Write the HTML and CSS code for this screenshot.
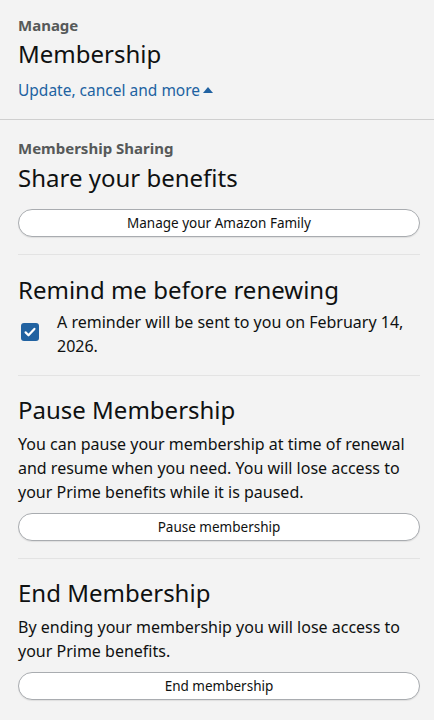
FILE: index.html
```html
<!DOCTYPE html>
<html lang="en">
<head>
    <meta charset="UTF-8">
    <meta name="viewport" content="width=device-width, initial-scale=1.0">
    <title>Manage Membership</title>
    <link rel="stylesheet" href="styles.css">
</head>
<body>
    <div class="card">
        <header class="manage-head">
            <div class="eyebrow">Manage</div>
            <h1 class="title">Membership</h1>
            <a class="toggle" href="#">Update, cancel and more<span class="caret"></span></a>
        </header>

        <div class="manage-body">
            <section class="block sharing">
                <div class="eyebrow">Membership Sharing</div>
                <h2 class="title">Share your benefits</h2>
                <button class="pill">Manage your Amazon Family</button>
            </section>

            <section class="block reminder">
                <h2 class="title">Remind me before renewing</h2>
                <label class="check-row">
                    <span class="box">
                        <svg viewBox="0 0 18 18" width="18" height="18">
                            <path d="M4.6 9.4l2.9 2.9 5.9-6.4" fill="none" stroke="#fff" stroke-width="2.2" stroke-linecap="round" stroke-linejoin="round"/>
                        </svg>
                    </span>
                    <span class="check-text">A reminder will be sent to you on February 14, 2026.</span>
                </label>
            </section>

            <section class="block">
                <h2 class="title">Pause Membership</h2>
                <p class="desc">You can pause your membership at time of renewal and resume when you need. You will lose access to your Prime benefits while it is paused.</p>
                <button class="pill">Pause membership</button>
            </section>

            <section class="block">
                <h2 class="title">End Membership</h2>
                <p class="desc">By ending your membership you will lose access to your Prime benefits.</p>
                <button class="pill">End membership</button>
            </section>
        </div>
    </div>
</body>
</html>
```

FILE: styles.css
```css
*, *::before, *::after {
    box-sizing: border-box;
}
body {
    margin: 0;
    background: #fff;
    font-family: "Noto Sans", "Liberation Sans", sans-serif;
    color: #0f1111;
}
.card {
    background: #f3f3f3;
    padding-bottom: 12px;
}
.manage-head {
    padding: 15px 14px 18px 18px;
    border-bottom: 1px solid #cfcfcf;
}
.eyebrow {
    font-size: 15px;
    font-weight: 700;
    color: #565959;
    line-height: 20px;
}
.title {
    margin: 0;
    font-size: 24px;
    font-weight: 400;
    line-height: 32px;
}
.manage-head .title {
    margin-top: 3px;
}
.toggle {
    display: inline-flex;
    align-items: center;
    margin-top: 9px;
    font-size: 15.5px;
    line-height: 22px;
    color: #2162a1;
    text-decoration: none;
}
.caret {
    width: 0;
    height: 0;
    margin-left: 3px;
    border-left: 5px solid transparent;
    border-right: 5px solid transparent;
    border-bottom: 6px solid #2162a1;
}
.manage-body {
    padding: 0 14px 0 18px;
}
.block {
    padding: 18px 0 17px;
    border-bottom: 1px solid #e3e3e3;
}
.block:last-child {
    border-bottom: none;
}
.block.reminder {
    padding-top: 19px;
}
.block .eyebrow + .title {
    margin-top: 4px;
}
.pill {
    display: block;
    width: 100%;
    height: 28px;
    margin-top: 15px;
    background: #fff;
    border: 1px solid #a9acb0;
    border-radius: 14px;
    font-family: inherit;
    font-size: 13.5px;
    color: #0f1111;
    box-shadow: 0 1px 1px rgba(0, 0, 0, 0.08);
}
.desc + .pill {
    margin-top: 9px;
}
.check-row {
    display: flex;
    align-items: flex-start;
    gap: 18px;
    margin-top: 4px;
    padding-left: 3px;
}
.box {
    flex: none;
    width: 18px;
    height: 18px;
    margin-top: 13px;
    background: #2162a1;
    border-radius: 3px;
}
.box svg {
    display: block;
}
.check-text {
    font-size: 16px;
    line-height: 24px;
}
.desc {
    margin: 6px 0 0;
    font-size: 16px;
    line-height: 24px;
}
```
